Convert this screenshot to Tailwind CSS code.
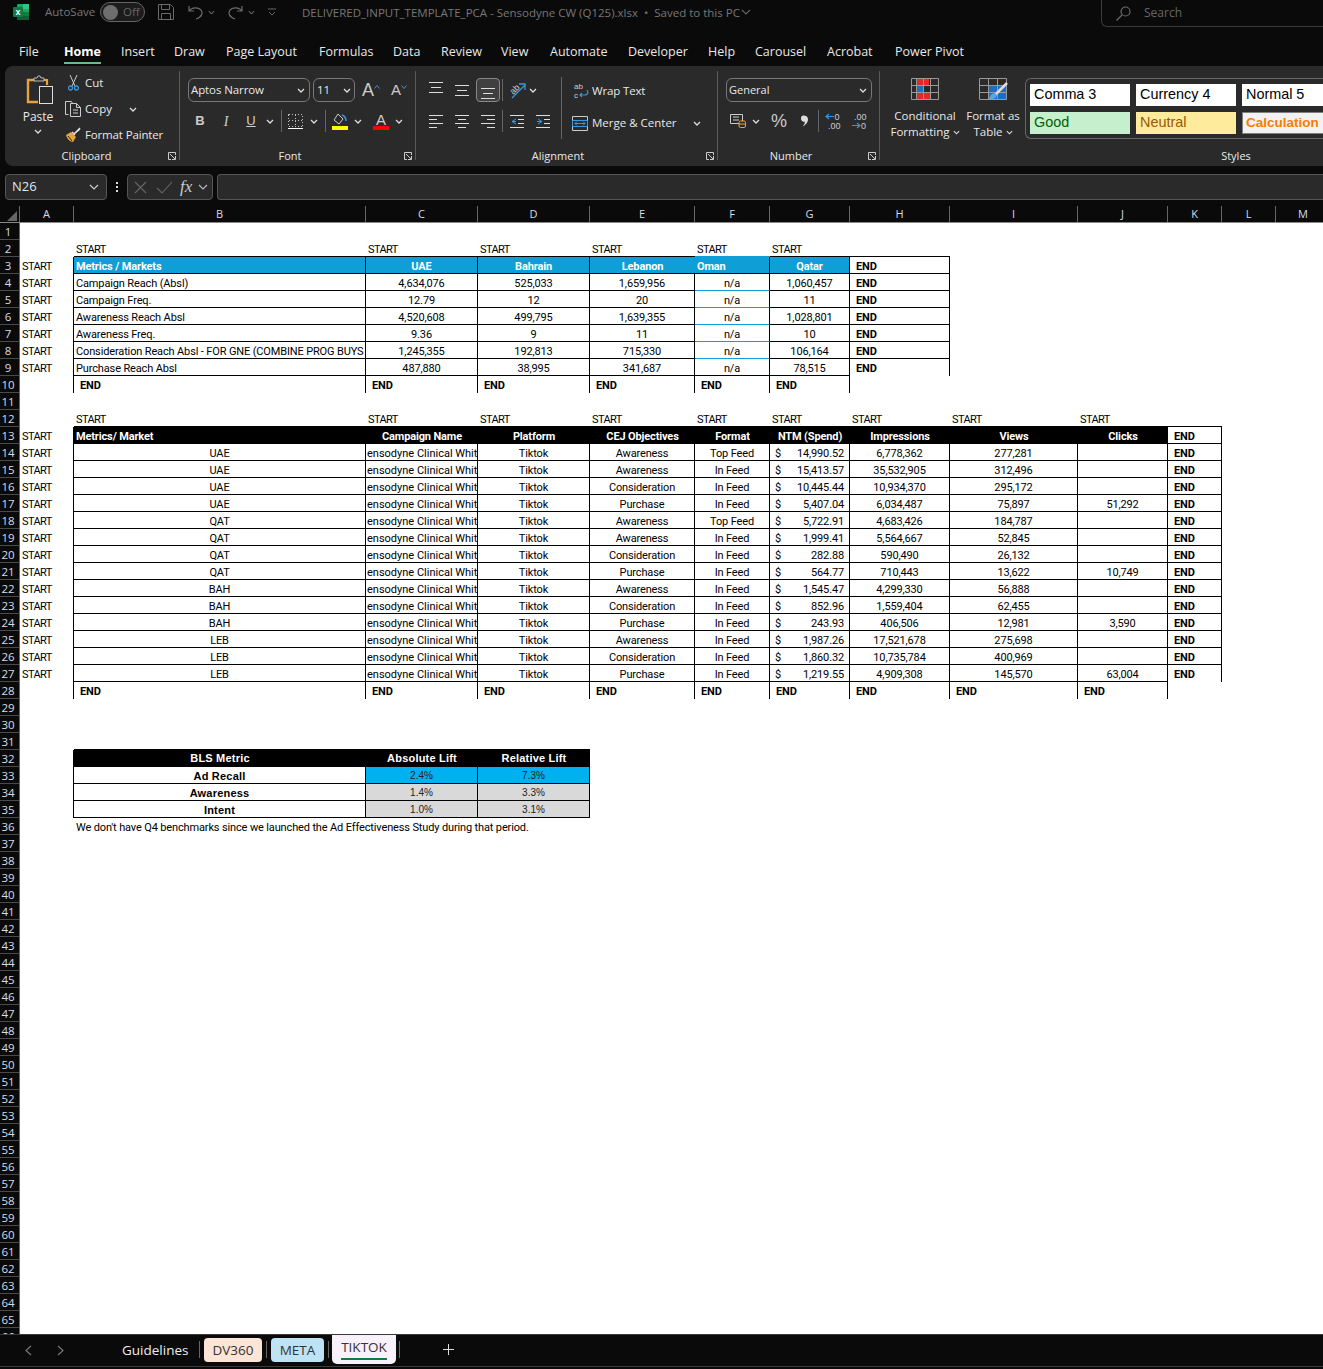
<!DOCTYPE html>
<html lang="en">
<head>
    <meta charset="UTF-8">
    <meta name="viewport" content="width=device-width, initial-scale=1.0">
    <title>DELIVERED_INPUT_TEMPLATE_PCA - Sensodyne CW (Q125).xlsx</title>
    <script src="https://cdn.jsdelivr.net/npm/@tailwindcss/browser@4"></script>
</head>
<body class="bg-[#0a0a0a] overflow-hidden h-[1369px] font-['Open_Sans',sans-serif] text-[#e8e8e8]">

    <!-- title bar -->
    <div class="flex h-[28px] pb-[4px] items-center text-[11.5px] text-[#777]">
        <svg class="ml-[13px] w-[16px] h-[16px]" viewBox="0 0 16 16">
            <rect x="4" width="12" height="16" rx="1" fill="#21a366"/>
            <rect x="10" width="6" height="5" fill="#33c481"/>
            <rect x="10" y="8" width="6" height="4" fill="#107c41"/>
            <rect x="4" y="12" width="12" height="4" fill="#185c37"/>
            <rect y="3" width="10" height="10" rx="1" fill="#107c41"/>
            <text x="5" y="11" text-anchor="middle" font-size="9" font-weight="700" fill="#fff" font-family="Liberation Sans">x</text>
        </svg>
        <span class="ml-[16px] w-[55px]">AutoSave</span>
        <div class="w-[45px] h-[20px] rounded-full border border-[#666] bg-[#1c1c1c] flex items-center pl-[2px]">
            <span class="w-[15px] h-[15px] rounded-full bg-[#6e6e6e]"></span>
            <span class="ml-[5px] text-[11.5px] text-[#666]">Off</span>
        </div>
        <svg class="ml-[13px] w-[16px] h-[16px]" viewBox="0 0 16 16" fill="none" stroke="#6a6a6a"><path d="M.5.5h12l3 3v12H.5zM3.5.5v5h8v-5M3.5 15.5v-6h9v6"/></svg>
        <svg class="ml-[14px] w-[15px] h-[15px]" viewBox="0 0 15 15" fill="none" stroke="#6a6a6a" stroke-width="1.2"><path d="M1 1v5h5M1 6c3-4 9-4 12-1 2 3 1 7-5 9"/></svg>
        <svg class="ml-[5px] w-[7px] h-[5px]" viewBox="0 0 8 5"><path d="M1 1l3 3 3-3" fill="none" stroke="#666" stroke-width="1.2"/></svg>
        <svg class="ml-[13px] w-[15px] h-[15px]" viewBox="0 0 15 15" fill="none" stroke="#6a6a6a" stroke-width="1.2"><path d="M14 1v5H9M14 6C11 2 5 2 2 5c-2 3-1 7 5 9"/></svg>
        <svg class="ml-[5px] w-[7px] h-[5px]" viewBox="0 0 8 5"><path d="M1 1l3 3 3-3" fill="none" stroke="#666" stroke-width="1.2"/></svg>
        <svg class="ml-[13px] w-[8px] h-[8px]" viewBox="0 0 8 8" fill="none" stroke="#666"><path d="M0 1h8M1 4l3 3 3-3"/></svg>
        <span class="ml-[26px] w-[439px] whitespace-nowrap pt-px">DELIVERED_INPUT_TEMPLATE_PCA - Sensodyne CW (Q125).xlsx&nbsp; •&nbsp; Saved to this PC</span>
        <svg class="w-[10px] h-[6px]" viewBox="0 0 10 6"><path d="M1 1l4 4 4-4" fill="none" stroke="#666" stroke-width="1.1"/></svg>
        <div class="ml-[350px] flex-1 self-start h-[27px] border-l border-b border-[#3a3a3a] rounded-bl-md flex items-center pl-[14px]">
            <svg class="w-[15px] h-[15px]" viewBox="0 0 15 15" fill="none" stroke="#6a6a6a" stroke-width="1.2"><circle cx="9.5" cy="5.5" r="4.5"/><path d="M6 9l-5.5 5.5"/></svg>
            <span class="ml-[13px] text-[12px] text-[#666]">Search</span>
        </div>
    </div>

    <!-- menu tabs -->
    <div class="flex h-[38px] pt-[10px] pl-[19px] items-center text-[12.5px] whitespace-nowrap">
        <div class="w-[45px]">File</div>
        <div class="w-[57px] font-bold text-white"><span class="inline-block border-b-2 border-[#6cb98a] pt-[3px] pb-[1px]">Home</span></div>
        <div class="w-[53px]">Insert</div>
        <div class="w-[52px]">Draw</div>
        <div class="w-[93px]">Page Layout</div>
        <div class="w-[74px]">Formulas</div>
        <div class="w-[48px]">Data</div>
        <div class="w-[60px]">Review</div>
        <div class="w-[49px]">View</div>
        <div class="w-[78px]">Automate</div>
        <div class="w-[80px]">Developer</div>
        <div class="w-[47px]">Help</div>
        <div class="w-[72px]">Carousel</div>
        <div class="w-[68px]">Acrobat</div>
        <div>Power Pivot</div>
    </div>

    <!-- ribbon -->
    <div class="ml-[5px] h-[100px] flex bg-[#2a2a2a] rounded-l-lg text-[11.5px] whitespace-nowrap overflow-hidden">

        <!-- clipboard -->
        <div class="w-[174px] shrink-0 flex flex-col">
            <div class="flex h-[82px]">
                <div class="ml-[6px] w-[54px] flex flex-col items-center pt-[9px]">
                    <svg class="ml-[4px] w-[28px] h-[30px]" viewBox="0 0 28 30" fill="none">
                        <path d="M9 5H2v22h10" stroke="#e8a33d" stroke-width="2.4"/>
                        <path d="M15 5h6v5" stroke="#e8a33d" stroke-width="2.2"/>
                        <path d="M8 6V3h3l1-2h2l1 2h3v3z" stroke="#bbb" fill="#2a2a2a"/>
                        <rect x="13.5" y="11.5" width="13" height="17" stroke="#ddd" fill="#2a2a2a"/>
                    </svg>
                    <span class="mt-[3px] leading-[18px] text-[12px]">Paste</span>
                    <svg class="mt-[3px] w-[8px] h-[5px]" viewBox="0 0 8 5"><path d="M1 1l3 3 3-3" fill="none" stroke="#ddd" stroke-width="1.3"/></svg>
                </div>
                <div class="pt-[4px] flex flex-col">
                    <div class="h-[26px] flex items-center">
                        <svg class="ml-[3px] w-[11px] h-[16px]" viewBox="0 0 11 16" fill="none"><path d="M2 0l5 11M9 0L4 11" stroke="#ccc"/><circle cx="2.5" cy="13" r="2" stroke="#3a96dd" stroke-width="1.3"/><circle cx="8.5" cy="13" r="2" stroke="#3a96dd" stroke-width="1.3"/></svg>
                        <span class="ml-[6px]">Cut</span>
                    </div>
                    <div class="h-[26px] flex items-center">
                        <svg class="w-[16px] h-[16px]" viewBox="0 0 16 16" fill="none" stroke="#ccc"><path d="M3.5 13.5h-3V.5h6l1 2M5.5 15.5v-13h6l4 4v9zM11.5 2.500v4h4M8 9h5M8 12h5"/></svg>
                        <span class="ml-[4px] w-[48px]">Copy</span>
                        <svg class="-ml-[4px] w-[8px] h-[5px]" viewBox="0 0 8 5"><path d="M1 1l3 3 3-3" fill="none" stroke="#ddd" stroke-width="1.3"/></svg>
                    </div>
                    <div class="h-[26px] flex items-center">
                        <svg class="w-[16px] h-[16px]" viewBox="0 0 16 16"><path d="M1 8l5-3 5 5-3 5c-3 0-6-3-7-7z" fill="#e8a33d"/><path d="M3 9l4 5" stroke="#2a2a2a"/><path d="M7 5l2 2 6-6M10 8l-1-1 6-5" stroke="#ddd" stroke-width="1.5" fill="none"/></svg>
                        <span class="ml-[4px] tracking-[-0.15px]">Format Painter</span>
                    </div>
                </div>
            </div>
            <div class="flex items-center h-[18px] pb-[2px]">
                <span class="w-[163px] text-center text-[11px]">Clipboard</span>
                <svg class="w-[8px] h-[8px]" viewBox="0 0 8 8" fill="none" stroke="#ccc"><path d="M7.5 3V.5H.5v7H3M2 2l5 5M7.5 4v3.500H4"/></svg>
            </div>
        </div>
        <div class="w-px h-[89px] mt-[5px] bg-[#5a5a5a] shrink-0"></div>

        <!-- font -->
        <div class="w-[235px] shrink-0 flex flex-col">
            <div class="h-[82px] pt-[12px]">
                <div class="flex items-center h-[24px]">
                    <div class="ml-[8px] w-[122px] h-[24px] border border-[#777] rounded-md flex items-center justify-between px-[2px] pr-[4px]">
                        <span class="tracking-[-0.1px]">Aptos Narrow</span>
                        <svg class="w-[8px] h-[5px]" viewBox="0 0 8 5"><path d="M1 1l3 3 3-3" fill="none" stroke="#ddd" stroke-width="1.3"/></svg>
                    </div>
                    <div class="ml-[3px] w-[42px] h-[24px] border border-[#777] rounded-md flex items-center justify-between px-[3px]">
                        <span>11</span>
                        <svg class="w-[8px] h-[5px]" viewBox="0 0 8 5"><path d="M1 1l3 3 3-3" fill="none" stroke="#ddd" stroke-width="1.3"/></svg>
                    </div>
                    <span class="ml-[7px] w-[12px] text-[18px] text-[#ccc] font-['Liberation_Sans',sans-serif]">A</span>
                    <svg class="mb-[7px] w-[6px] h-[4px]" viewBox="0 0 6 4"><path d="M.5 3.5l2.500-3 2.500 3" fill="none" stroke="#3a96dd"/></svg>
                    <span class="ml-[11px] w-[10px] text-[15px] text-[#ccc] font-['Liberation_Sans',sans-serif]">A</span>
                    <svg class="mb-[7px] w-[6px] h-[4px]" viewBox="0 0 6 4"><path d="M.5.5l2.500 3 2.500-3" fill="none" stroke="#3a96dd"/></svg>
                </div>
                <div class="flex items-center h-[24px] mt-[7px] font-['Liberation_Sans',sans-serif]">
                    <span class="ml-[10px] w-[20px] text-center font-bold text-[13px] text-[#ccc]">B</span>
                    <span class="ml-[6px] w-[20px] text-center italic text-[14px] font-['Liberation_Serif',serif] text-[#ccc]">I</span>
                    <span class="ml-[5px] w-[20px] text-center underline text-[13px] text-[#ccc]">U</span>
                    <svg class="ml-[5px] w-[8px] h-[5px]" viewBox="0 0 8 5"><path d="M1 1l3 3 3-3" fill="none" stroke="#ddd" stroke-width="1.3"/></svg>
                    <span class="ml-[7px] w-px h-[22px] bg-[#666]"></span>
                    <svg class="ml-[6px] w-[15px] h-[15px]" viewBox="0 0 15 15" fill="none" shape-rendering="crispEdges"><path d="M.5.5h14v12H.5zM7.5.5v12M.5 6.5h14" stroke="#bbb" stroke-dasharray="1 2"/><path d="M0 14.5h15" stroke="#fff"/></svg>
                    <svg class="ml-[7px] w-[8px] h-[5px]" viewBox="0 0 8 5"><path d="M1 1l3 3 3-3" fill="none" stroke="#ddd" stroke-width="1.3"/></svg>
                    <span class="ml-[7px] w-px h-[22px] bg-[#666]"></span>
                    <svg class="ml-[6px] w-[16px] h-[17px]" viewBox="0 0 16 17" fill="none"><path d="M6 1l5 5-4 5-5-4z" stroke="#ccc"/><path d="M10 2c3 1 4 3 4 6" stroke="#3a96dd" stroke-width="1.5"/><rect y="13" width="16" height="4" fill="#ffff00"/></svg>
                    <svg class="ml-[6px] w-[8px] h-[5px]" viewBox="0 0 8 5"><path d="M1 1l3 3 3-3" fill="none" stroke="#ddd" stroke-width="1.3"/></svg>
                    <div class="ml-[11px] w-[16px] flex flex-col items-center">
                        <span class="text-[15px] leading-[13px] text-[#ccc]">A</span>
                        <span class="w-[16px] h-[4px] bg-[#ff0000]"></span>
                    </div>
                    <svg class="ml-[6px] w-[8px] h-[5px]" viewBox="0 0 8 5"><path d="M1 1l3 3 3-3" fill="none" stroke="#ddd" stroke-width="1.3"/></svg>
                </div>
            </div>
            <div class="flex items-center h-[18px] pb-[2px]">
                <span class="w-[220px] text-center text-[11px]">Font</span>
                <svg class="ml-[4px] w-[8px] h-[8px]" viewBox="0 0 8 8" fill="none" stroke="#ccc"><path d="M7.5 3V.5H.5v7H3M2 2l5 5M7.5 4v3.500H4"/></svg>
            </div>
        </div>
        <div class="w-px h-[89px] mt-[5px] bg-[#5a5a5a] shrink-0"></div>

        <!-- alignment -->
        <div class="w-[301px] shrink-0 flex flex-col">
            <div class="h-[82px] flex">
                <div class="w-[145px] pt-[12px]">
                    <div class="flex items-center h-[24px]">
                        <svg class="ml-[12px] mb-[6px] w-[16px] h-[11px]" viewBox="0 0 16 11" stroke="#ddd"><path d="M1 .5h14M3 5.500h10M1 10.500h14"/></svg>
                        <svg class="ml-[10px] w-[16px] h-[11px]" viewBox="0 0 16 11" stroke="#ddd"><path d="M1 .5h14M3 5.500h10M1 10.500h14"/></svg>
                        <div class="ml-[6px] w-[24px] h-[24px] border border-[#888] rounded-[4px] bg-[#404040] flex justify-center items-end pb-[2px]">
                            <svg class="w-[16px] h-[11px]" viewBox="0 0 16 11" stroke="#ddd"><path d="M1 .5h14M3 5.500h10M1 10.500h14"/></svg>
                        </div>
                        <span class="ml-[2px] w-px h-[22px] bg-[#666]"></span>
                        <svg class="ml-[6px] w-[17px] h-[17px]" viewBox="0 0 17 17" fill="none"><text x="1" y="11" font-size="9" fill="#ccc" font-family="Liberation Sans" transform="rotate(-45 5 8)">ab</text><path d="M3 16L16 3M10 2h6v6" stroke="#3a96dd" stroke-width="1.3"/></svg>
                        <svg class="ml-[3px] w-[8px] h-[5px]" viewBox="0 0 8 5"><path d="M1 1l3 3 3-3" fill="none" stroke="#ddd" stroke-width="1.3"/></svg>
                    </div>
                    <div class="flex items-center h-[24px] mt-[7px]">
                        <svg class="ml-[13px] w-[14px] h-[13px]" viewBox="0 0 14 13" stroke="#ddd"><path d="M0 .5h14M0 4.500h8M0 8.500h14M0 12.500h8"/></svg>
                        <svg class="ml-[12px] w-[14px] h-[13px]" viewBox="0 0 14 13" stroke="#ddd"><path d="M0 .5h14M3 4.500h8M0 8.500h14M3 12.500h8"/></svg>
                        <svg class="ml-[12px] w-[14px] h-[13px]" viewBox="0 0 14 13" stroke="#ddd"><path d="M0 .5h14M6 4.500h8M0 8.500h14M6 12.500h8"/></svg>
                        <span class="ml-[7px] w-px h-[22px] bg-[#666]"></span>
                        <svg class="ml-[7px] w-[14px] h-[13px]" viewBox="0 0 14 13" fill="none"><path d="M0 .5h14M8 4.500h6M8 8.500h6M0 12.500h14" stroke="#ddd"/><path d="M6 4L2 6.500 6 9M2 6.500h4" stroke="#3a96dd"/></svg>
                        <svg class="ml-[12px] w-[14px] h-[13px]" viewBox="0 0 14 13" fill="none"><path d="M0 .5h14M8 4.500h6M8 8.500h6M0 12.500h14" stroke="#ddd"/><path d="M2 4l4 2.500L2 9M6 6.500H1" stroke="#3a96dd"/></svg>
                    </div>
                </div>
                <div class="w-px h-[62px] mt-[11px] bg-[#666]"></div>
                <div class="pt-[13px] flex-1">
                    <div class="flex items-center h-[24px]">
                        <svg class="ml-[12px] w-[15px] h-[18px]" viewBox="0 0 15 18" fill="none"><text x="0" y="7" font-size="8" fill="#ccc" font-family="Liberation Sans">ab</text><text x="0" y="16" font-size="8" fill="#ccc" font-family="Liberation Sans">c</text><path d="M13 8c2 3 0 5-2 5H6m2-2l-2 2 2 2" stroke="#3a96dd" stroke-width="1.2"/></svg>
                        <span class="ml-[3px] tracking-[-0.15px]">Wrap Text</span>
                    </div>
                    <div class="flex items-center h-[24px] mt-[8px]">
                        <svg class="ml-[10px] w-[16px] h-[15px]" viewBox="0 0 16 15" fill="none"><path d="M.5.5h15v14H.5z" stroke="#ccc"/><path d="M3 7.500h10M5 5.500l-2 2 2 2M11 5.500l2 2-2 2" stroke="#3a96dd"/><path d="M.5 4.500h15v6H.5z" stroke="#3a96dd"/></svg>
                        <span class="ml-[4px] w-[101px]">Merge &amp; Center</span>
                        <svg class="w-[8px] h-[5px]" viewBox="0 0 8 5"><path d="M1 1l3 3 3-3" fill="none" stroke="#ddd" stroke-width="1.3"/></svg>
                    </div>
                </div>
            </div>
            <div class="flex items-center h-[18px] pb-[2px]">
                <span class="w-[284px] text-center text-[11px]">Alignment</span>
                <svg class="ml-[6px] w-[8px] h-[8px]" viewBox="0 0 8 8" fill="none" stroke="#ccc"><path d="M7.5 3V.5H.5v7H3M2 2l5 5M7.5 4v3.500H4"/></svg>
            </div>
        </div>
        <div class="w-px h-[89px] mt-[5px] bg-[#5a5a5a] shrink-0"></div>

        <!-- number -->
        <div class="w-[161px] shrink-0 flex flex-col">
            <div class="h-[82px] pt-[12px]">
                <div class="ml-[8px] w-[146px] h-[24px] border border-[#777] rounded-md flex items-center justify-between pl-[2px] pr-[4px]">
                    <span class="text-[11px]">General</span>
                    <svg class="w-[8px] h-[5px]" viewBox="0 0 8 5"><path d="M1 1l3 3 3-3" fill="none" stroke="#ddd" stroke-width="1.3"/></svg>
                </div>
                <div class="flex items-center h-[24px] mt-[7px]">
                    <svg class="ml-[12px] w-[16px] h-[14px]" viewBox="0 0 16 14" fill="none"><path d="M.5.5h12v9H.5z" stroke="#ccc"/><path d="M3 3h6M3 6h6" stroke="#ccc"/><rect x="9" y="7" width="6.5" height="6.5" rx="1.5" fill="#2a2a2a" stroke="#e8a33d"/><path d="M9 10h6.500" stroke="#e8a33d"/></svg>
                    <svg class="ml-[6px] w-[8px] h-[5px]" viewBox="0 0 8 5"><path d="M1 1l3 3 3-3" fill="none" stroke="#ddd" stroke-width="1.3"/></svg>
                    <span class="ml-[11px] w-[16px] text-[18px] leading-none text-[#ccc] font-['Liberation_Sans',sans-serif] font-light">%</span>
                    <svg class="ml-[14px] w-[7px] h-[12px]" viewBox="0 0 9 14"><path d="M3 0c4 0 6 2 6 5 0 4-3 7-7 9 2-2 3-4 3-6C2 8 0 6.5 0 4s1-4 3-4z" fill="#ddd"/></svg>
                    <span class="ml-[10px] w-px h-[22px] bg-[#666]"></span>
                    <svg class="ml-[6px] w-[16px] h-[18px]" viewBox="0 0 16 18" fill="none"><text x="9.500" y="8" font-size="9" fill="#ccc" font-family="Liberation Sans">0</text><text x="3" y="17" font-size="9" fill="#ccc" font-family="Liberation Sans">.00</text><path d="M9 4.500H1M4 2L1 4.500 4 7" stroke="#3a96dd" stroke-width="1.2"/></svg>
                    <svg class="ml-[10px] w-[16px] h-[18px]" viewBox="0 0 16 18" fill="none"><text x="3" y="8" font-size="9" fill="#ccc" font-family="Liberation Sans">.00</text><text x="10" y="17" font-size="9" fill="#ccc" font-family="Liberation Sans">0</text><path d="M1 13.500h8M6 11l3 2.500L6 16" stroke="#3a96dd" stroke-width="1.2"/></svg>
                </div>
            </div>
            <div class="flex items-center h-[18px] pb-[2px]">
                <span class="w-[146px] text-center text-[11px]">Number</span>
                <svg class="ml-[4px] w-[8px] h-[8px]" viewBox="0 0 8 8" fill="none" stroke="#ccc"><path d="M7.5 3V.5H.5v7H3M2 2l5 5M7.5 4v3.500H4"/></svg>
            </div>
        </div>
        <div class="w-px h-[89px] mt-[5px] bg-[#5a5a5a] shrink-0"></div>

        <!-- styles -->
        <div class="flex-1 flex flex-col overflow-hidden">
            <div class="h-[82px] flex">
                <div class="ml-[9px] w-[72px] flex flex-col items-center pt-[12px] shrink-0">
                    <svg class="w-[28px] h-[22px]" viewBox="0 0 28 22" fill="none">
                        <rect x="5" y="1" width="13" height="6" fill="#e02b2b"/>
                        <rect x="5" y="8" width="8" height="6" fill="#1a6fc4"/>
                        <rect x="5" y="15" width="15" height="6" fill="#e02b2b"/>
                        <path d="M.5.5h27v21H.5zM.5 7.500h27M.5 14.500h27M5.500.5v21M12.500.5v21M19.500.5v21" stroke="#999"/>
                    </svg>
                    <span class="mt-[8px] leading-[16px]">Conditional</span>
                    <span class="flex items-center leading-[16px]">Formatting<svg class="ml-[3px] w-[7px] h-[5px]" viewBox="0 0 8 5"><path d="M1 1l3 3 3-3" fill="none" stroke="#ddd" stroke-width="1.3"/></svg></span>
                </div>
                <div class="w-[64px] flex flex-col items-center pt-[12px] shrink-0">
                    <svg class="w-[29px] h-[22px]" viewBox="0 0 29 22" fill="none">
                        <rect x="10" y="7" width="17" height="14" fill="#1a6fc4"/>
                        <path d="M.5.5h27v21H.5zM.5 7.500h27M.5 14.500h27M9.500.5v21M18.500.5v21" stroke="#999"/>
                        <path d="M28 5L16 17" stroke="#ddd" stroke-width="2.5"/>
                        <path d="M16 15c-3 0-5 2-6 6 3 1 7 0 8-4z" fill="#5aa5e0"/>
                    </svg>
                    <span class="mt-[8px] leading-[16px]">Format as</span>
                    <span class="flex items-center leading-[16px]">Table<svg class="ml-[3px] w-[7px] h-[5px]" viewBox="0 0 8 5"><path d="M1 1l3 3 3-3" fill="none" stroke="#ddd" stroke-width="1.3"/></svg></span>
                </div>
                <div class="mt-[12px] h-[61px] flex-1 border-l border-y border-[#666] rounded-l-md pl-[4px] pt-[5px] overflow-hidden">
                    <div class="grid grid-cols-[100px_100px_100px] gap-[6px] text-[14.4px] font-['Liberation_Sans',sans-serif]">
                        <div class="h-[22px] bg-white text-black flex items-center pl-[4px]">Comma 3</div>
                        <div class="h-[22px] bg-white text-black flex items-center pl-[4px]">Currency 4</div>
                        <div class="h-[22px] bg-white text-black flex items-center pl-[4px]">Normal 5</div>
                        <div class="h-[22px] bg-[#c6efce] text-[#006100] flex items-center pl-[4px]">Good</div>
                        <div class="h-[22px] bg-[#ffeb9c] text-[#9c5700] flex items-center pl-[4px]">Neutral</div>
                        <div class="h-[22px] bg-[#f2f2f2] text-[#fa7d00] font-bold text-[13.5px] border border-[#7f7f7f] flex items-center pl-[3px]">Calculation</div>
                    </div>
                </div>
            </div>
            <div class="flex items-center h-[18px] pb-[2px]">
                <span class="w-[712px] shrink-0 text-center text-[11px]">Styles</span>
            </div>
        </div>
    </div>

    <!-- formula bar -->
    <div class="flex h-[26px] mt-[8px] ml-[5px] items-center">
        <div class="w-[102px] h-[26px] border border-[#555] rounded-[4px] bg-[#2a2a2a] flex items-center justify-between pl-[6px] pr-[7px] text-[13px] text-[#dde6ee]">
            <span>N26</span>
            <svg class="w-[10px] h-[6px]" viewBox="0 0 10 6"><path d="M1 1l4 4 4-4" fill="none" stroke="#ccc" stroke-width="1.2"/></svg>
        </div>
        <div class="ml-[9px] w-[2px] flex flex-col gap-[2px]">
            <span class="w-[2px] h-[2px] bg-[#ddd]"></span><span class="w-[2px] h-[2px] bg-[#ddd]"></span><span class="w-[2px] h-[2px] bg-[#ddd]"></span>
        </div>
        <div class="ml-[9px] w-[86px] h-[26px] border border-[#555] rounded-[4px] bg-[#2a2a2a] flex items-center">
            <svg class="ml-[6px] w-[13px] h-[13px]" viewBox="0 0 13 13"><path d="M1 1l11 11M12 1L1 12" stroke="#666" stroke-width="1.1"/></svg>
            <svg class="ml-[9px] w-[17px] h-[13px]" viewBox="0 0 17 13"><path d="M1 7l5 5L16 1" fill="none" stroke="#666" stroke-width="1.1"/></svg>
            <span class="ml-[7px] w-[17px] italic text-[17px] text-[#ccc] font-['Liberation_Serif',serif]">fx</span>
            <svg class="ml-[1px] w-[10px] h-[6px]" viewBox="0 0 10 6"><path d="M1 1l4 4 4-4" fill="none" stroke="#bbb" stroke-width="1.1"/></svg>
        </div>
        <div class="ml-[4px] flex-1 h-[26px] border-y border-l border-[#555] rounded-l-[4px] bg-[#2a2a2a]"></div>
    </div>

    <!-- column headers -->
    <div class="flex h-[16px] mt-[6px] items-stretch text-[11px] text-[#d4deea] border-b border-[#888] leading-[15px] box-content">
        <div class="w-[20px] shrink-0 flex items-end justify-end border-r border-[#666] pr-[2px] pb-[1px]">
            <svg class="w-[10px] h-[10px]" viewBox="0 0 10 10"><path d="M10 0v10H0z" fill="#666"/></svg>
        </div>
        <div class="w-[54px] shrink-0 text-center border-r border-[#666]">A</div>
        <div class="w-[292px] shrink-0 text-center border-r border-[#666]">B</div>
        <div class="w-[112px] shrink-0 text-center border-r border-[#666]">C</div>
        <div class="w-[112px] shrink-0 text-center border-r border-[#666]">D</div>
        <div class="w-[105px] shrink-0 text-center border-r border-[#666]">E</div>
        <div class="w-[75px] shrink-0 text-center border-r border-[#666]">F</div>
        <div class="w-[80px] shrink-0 text-center border-r border-[#666]">G</div>
        <div class="w-[100px] shrink-0 text-center border-r border-[#666]">H</div>
        <div class="w-[128px] shrink-0 text-center border-r border-[#666]">I</div>
        <div class="w-[90px] shrink-0 text-center border-r border-[#666]">J</div>
        <div class="w-[54px] shrink-0 text-center border-r border-[#666]">K</div>
        <div class="w-[54px] shrink-0 text-center border-r border-[#666]">L</div>
        <div class="w-[54px] shrink-0 text-center">M</div>
    </div>

    <!-- sheet -->
    <div class="flex h-[1111px] overflow-hidden">
        <div id="row-heads" class="w-[20px] shrink-0 border-r border-[#666] text-[11.5px] text-[#d4deea]"></div>
        <div id="sheet" class="flex-1 bg-white text-black text-[11px] tracking-[-0.14px] font-['Liberation_Sans_Narrow',Roboto,sans-serif]"></div>
    </div>

    <!-- sheet tabs -->
    <div class="h-[33px] border-y border-[#3a3a3a] flex items-start text-[13.5px] whitespace-nowrap">
        <svg class="ml-[24px] mt-[10px] w-[8px] h-[11px]" viewBox="0 0 8 11"><path d="M7 1L2 5.500 7 10" fill="none" stroke="#777" stroke-width="1.2"/></svg>
        <svg class="ml-[25px] mt-[10px] w-[8px] h-[11px]" viewBox="0 0 8 11"><path d="M1 1l5 4.500L1 10" fill="none" stroke="#777" stroke-width="1.2"/></svg>
        <span class="ml-[57px] mt-[5px] w-[77px] text-[#eee]">Guidelines</span>
        <span class="mt-[6px] w-px h-[17px] bg-[#666]"></span>
        <div class="ml-[4px] mt-[3px] w-[58px] h-[24px] rounded-[4px] bg-[#fce4d6] text-[#333] flex items-center justify-center">DV360</div>
        <span class="ml-[4px] mt-[6px] w-px h-[17px] bg-[#666]"></span>
        <div class="ml-[4px] mt-[3px] w-[53px] h-[24px] rounded-[4px] bg-[#bde3f4] text-[#333] flex items-center justify-center">META</div>
        <span class="ml-[4px] mt-[6px] w-px h-[17px] bg-[#666]"></span>
        <div class="ml-[3px] w-[64px] h-[29px] rounded-b-[5px] bg-[#f8f0fa] text-[#333] flex flex-col items-center pt-[3px]">
            <span class="border-b-2 border-[#107c41] leading-[19px] h-[22px]">TIKTOK</span>
        </div>
        <span class="ml-[3px] mt-[6px] w-px h-[17px] bg-[#666]"></span>
        <svg class="ml-[43px] mt-[9px] w-[11px] h-[11px]" viewBox="0 0 11 11"><path d="M5.500 0v11M0 5.500h11" stroke="#ddd"/></svg>
    </div>

    <script>
        // cell helpers, class names are kept whole so the stylesheet picks them up
        const R = 'border-r border-black';
        const B = 'border-b border-black';
        const RB = 'border-r border-b border-black';
        const BLUE = 'bg-[#0f9ed5] text-white font-bold';
        const BLACK = 'bg-black text-white font-bold';
        const S = 'pl-[2px] tracking-[-0.6px]';
        const mid = 'justify-center';
        const rows = {};

        // table 1
        rows[2] = [[''], [S + ' ' + B, 'START'], [S + ' ' + B, 'START'], [S + ' ' + B, 'START'], [S + ' ' + B, 'START'], [S + ' border-b border-[#0f9ed5]', 'START'], [S + ' ' + B, 'START'], [B]];
        rows[3] = [[S + ' ' + R, 'START'], [BLUE + ' pl-[2px] ' + RB, 'Metrics / Markets'], [BLUE + ' ' + mid + ' ' + RB, 'UAE'], [BLUE + ' ' + mid + ' ' + RB, 'Bahrain'], [BLUE + ' ' + mid + ' ' + B, 'Lebanon'], [BLUE + ' pl-[2px] ' + RB, 'Oman'], [BLUE + ' ' + mid + ' ' + RB, 'Qatar'], ['pl-[6px] font-bold ' + RB, 'END']];
        const t1 = [
            ['Campaign Reach (Absl)', '4,634,076', '525,033', '1,659,956', '1,060,457'],
            ['Campaign Freq.', '12.79', '12', '20', '11'],
            ['Awareness Reach Absl', '4,520,608', '499,795', '1,639,355', '1,028,801'],
            ['Awareness Freq.', '9.36', '9', '11', '10'],
            ['Consideration Reach Absl - FOR GNE (COMBINE PROG BUYS', '1,245,355', '192,813', '715,330', '106,164'],
            ['Purchase Reach Absl', '487,880', '38,995', '341,687', '78,515'],
        ];
        t1.forEach((t, i) => {
            const last = i == 5;
            rows[4 + i] = [[S + ' ' + R, 'START'],
                ['pl-[2px] overflow-hidden ' + RB, t[0]],
                [mid + ' ' + RB, t[1]], [mid + ' ' + RB, t[2]], [mid + ' ' + RB, t[3]],
                [mid + (last ? ' border-r border-b border-black' : ' border-r border-r-black border-b border-b-[#0f9ed5]'), 'n/a'],
                [mid + ' ' + RB, t[4]],
                ['pl-[6px] font-bold ' + (last ? R : RB), 'END']];
        });
        rows[10] = [[R]].concat(Array(6).fill(['pl-[6px] font-bold ' + R, 'END']));

        // table 2
        rows[12] = [['']].concat(Array(9).fill([S + ' ' + B, 'START'])).concat([[B]]);
        rows[13] = [[S + ' ' + R, 'START'], [BLACK + ' pl-[2px]', 'Metrics/ Market']]
            .concat(['Campaign Name', 'Platform', 'CEJ Objectives', 'Format', 'NTM (Spend)', 'Impressions', 'Views', 'Clicks'].map(t => [BLACK + ' ' + mid, t]))
            .concat([['pl-[6px] font-bold ' + RB, 'END']]);
        const t2 = [
            ['UAE', 'Awareness', 'Top Feed', '14,990.52', '6,778,362', '277,281', ''],
            ['UAE', 'Awareness', 'In Feed', '15,413.57', '35,532,905', '312,496', ''],
            ['UAE', 'Consideration', 'In Feed', '10,445.44', '10,934,370', '295,172', ''],
            ['UAE', 'Purchase', 'In Feed', '5,407.04', '6,034,487', '75,897', '51,292'],
            ['QAT', 'Awareness', 'Top Feed', '5,722.91', '4,683,426', '184,787', ''],
            ['QAT', 'Awareness', 'In Feed', '1,999.41', '5,564,667', '52,845', ''],
            ['QAT', 'Consideration', 'In Feed', '282.88', '590,490', '26,132', ''],
            ['QAT', 'Purchase', 'In Feed', '564.77', '710,443', '13,622', '10,749'],
            ['BAH', 'Awareness', 'In Feed', '1,545.47', '4,299,330', '56,888', ''],
            ['BAH', 'Consideration', 'In Feed', '852.96', '1,559,404', '62,455', ''],
            ['BAH', 'Purchase', 'In Feed', '243.93', '406,506', '12,981', '3,590'],
            ['LEB', 'Awareness', 'In Feed', '1,987.26', '17,521,678', '275,698', ''],
            ['LEB', 'Consideration', 'In Feed', '1,860.32', '10,735,784', '400,969', ''],
            ['LEB', 'Purchase', 'In Feed', '1,219.55', '4,909,308', '145,570', '63,004'],
        ];
        t2.forEach((t, i) => {
            rows[14 + i] = [[S + ' ' + R, 'START'],
                [mid + ' ' + RB, t[0]],
                ['overflow-hidden tracking-normal pl-px ' + RB, 'ensodyne Clinical Whit'],
                [mid + ' ' + RB, 'Tiktok'],
                [mid + ' ' + RB, t[1]],
                [mid + ' ' + RB, t[2]],
                ['justify-between pl-[5px] pr-[5px] ' + RB, '<span>$</span><span>' + t[3] + '</span>'],
                [mid + ' ' + RB, t[4]],
                [mid + ' ' + RB, t[5]],
                [mid + ' ' + RB, t[6]],
                ['pl-[6px] font-bold ' + (i == 13 ? R : RB), 'END']];
        });
        rows[28] = [[R]].concat(Array(9).fill(['pl-[6px] font-bold ' + R, 'END']));

        // BLS table
        const blsHead = "bg-black text-white font-bold tracking-[0.2px] pb-[2px] font-['Liberation_Sans',sans-serif] justify-center";
        rows[31] = [[''], [B], [B], [B]];
        rows[32] = [[R], [blsHead, 'BLS Metric'], [blsHead, 'Absolute Lift'], [blsHead, 'Relative Lift']];
        [['Ad Recall', '2.4%', '7.3%', 'bg-[#00b0f0]'], ['Awareness', '1.4%', '3.3%', 'bg-[#d9d9d9]'], ['Intent', '1.0%', '3.1%', 'bg-[#d9d9d9]']].forEach((t, i) => {
            const val = "text-[10px] tracking-normal text-[#222] font-['Liberation_Sans',sans-serif] ";
            rows[33 + i] = [[R],
                ["font-bold tracking-[0.2px] font-['Liberation_Sans',sans-serif] " + mid + ' ' + RB, t[0]],
                [val + t[3] + ' ' + mid + ' ' + RB, t[1]],
                [val + t[3] + ' ' + mid + ' ' + RB, t[2]]];
        });
        rows[36] = [[''], ['pl-[2px]', "We don't have Q4 benchmarks since we launched the Ad Effectiveness Study during that period."]];

        let heads = '', body = '';
        for (let n = 1; n <= 66; n++) {
            heads += `<div class="h-[17px] border-b border-[#4a4a4a] flex items-center justify-center pr-[3px] pt-px leading-none">${n}</div>`;
            const cells = (rows[n] || []).map(c => {
                // a bottom border takes a pixel off the cell, so text needs one more on top
                const top = c[0].includes('border-b') ? 'pt-[2px]' : 'pt-px';
                return `<div class="flex items-center h-[17px] ${top} whitespace-nowrap leading-none ${c[0]}">${c[1] || ''}</div>`;
            }).join('');
            body += `<div class="grid grid-cols-[54px_292px_112px_112px_105px_75px_80px_100px_128px_90px_54px] h-[17px]">${cells}</div>`;
        }
        document.getElementById('row-heads').innerHTML = heads;
        document.getElementById('sheet').innerHTML = body;
    </script>
</body>
</html>
